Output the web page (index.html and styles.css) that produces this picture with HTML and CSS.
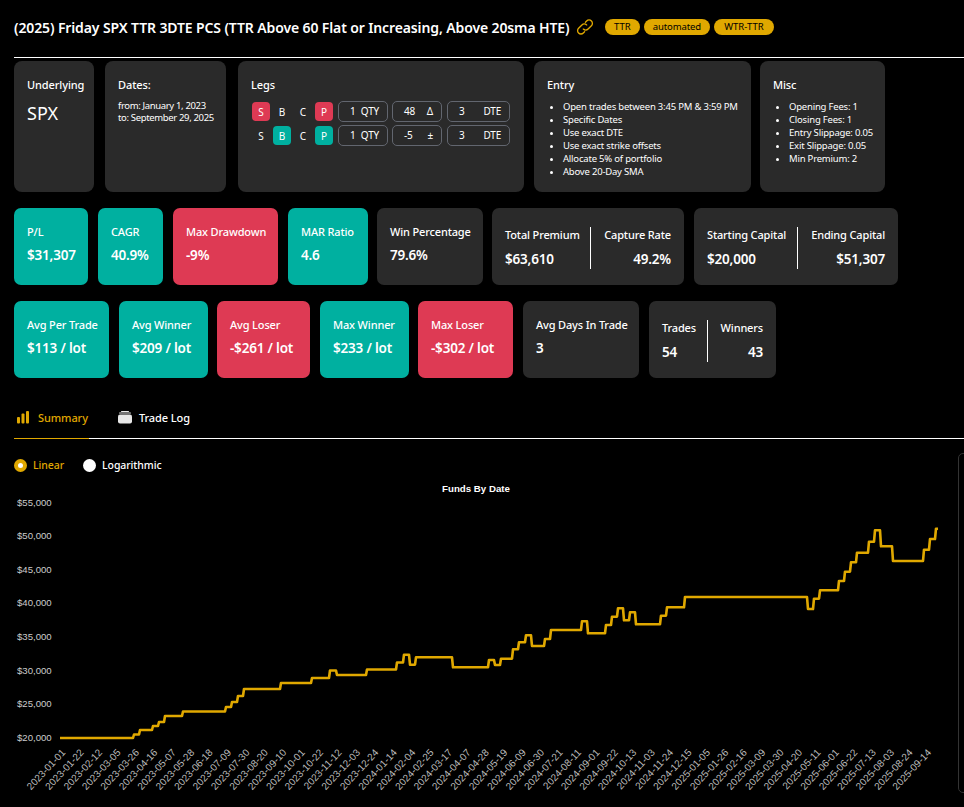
FILE: index.html
```html
<!DOCTYPE html>
<html lang="en">
<head>
<meta charset="utf-8">
<title>Friday SPX TTR 3DTE PCS</title>
<link rel="stylesheet" href="styles.css">
</head>
<body>
<header class="head">
  <h1 class="title">(2025) Friday SPX TTR 3DTE PCS (TTR Above 60 Flat or Increasing, Above 20sma HTE)</h1>
  <svg class="link-icon" viewBox="0 0 24 24" fill="none" stroke="#e0a800" stroke-width="1.6" stroke-linecap="round" stroke-linejoin="round"><path d="M10 14.5a4 4 0 0 0 5.7 0l4-4a4 4 0 0 0-5.7-5.7l-1.5 1.5"/><path d="M14 9.5a4 4 0 0 0-5.7 0l-4 4a4 4 0 0 0 5.7 5.7l1.5-1.5"/></svg>
  <span class="tag t35">TTR</span><span class="tag t66">automated</span><span class="tag t60">WTR-TTR</span>
</header>
<section class="row info">
  <div class="card c-under"><h3>Underlying</h3><p class="spx">SPX</p></div>
  <div class="card c-dates"><h3>Dates:</h3><p class="small">from: January 1, 2023<br>to: September 29, 2025</p></div>
  <div class="card c-legs"><h3>Legs</h3>
    <div class="leg">
      <span class="lt red">S</span><span class="lt">B</span><span class="lt">C</span><span class="lt red">P</span>
      <span class="box b1"><i>1</i><i>QTY</i></span><span class="box b2"><i>48</i><i>Δ</i></span><span class="box b3"><i>3</i><i>DTE</i></span>
    </div>
    <div class="leg">
      <span class="lt">S</span><span class="lt teal">B</span><span class="lt">C</span><span class="lt teal">P</span>
      <span class="box b1"><i>1</i><i>QTY</i></span><span class="box b2"><i>-5</i><i>±</i></span><span class="box b3"><i>3</i><i>DTE</i></span>
    </div>
  </div>
  <div class="card c-entry"><h3>Entry</h3>
    <ul class="small"><li>Open trades between 3:45 PM &amp; 3:59 PM</li><li>Specific Dates</li><li>Use exact DTE</li><li>Use exact strike offsets</li><li>Allocate 5% of portfolio</li><li>Above 20-Day SMA</li></ul>
  </div>
  <div class="card c-misc"><h3>Misc</h3>
    <ul class="small"><li>Opening Fees: 1</li><li>Closing Fees: 1</li><li>Entry Slippage: 0.05</li><li>Exit Slippage: 0.05</li><li>Min Premium: 2</li></ul>
  </div>
</section>
<section class="row stats s1">
  <div class="stat teal w74"><b>P/L</b><strong>$31,307</strong></div>
  <div class="stat teal w65"><b>CAGR</b><strong>40.9%</strong></div>
  <div class="stat red w105"><b>Max Drawdown</b><strong>-9%</strong></div>
  <div class="stat teal w80"><b>MAR Ratio</b><strong>4.6</strong></div>
  <div class="stat dark w106"><b>Win Percentage</b><strong>79.6%</strong></div>
  <div class="stat dark pair w192"><div class="col"><b>Total Premium</b><strong>$63,610</strong></div><div class="col end"><b>Capture Rate</b><strong>49.2%</strong></div></div>
  <div class="stat dark pair w204"><div class="col"><b>Starting Capital</b><strong>$20,000</strong></div><div class="col end"><b>Ending Capital</b><strong>$51,307</strong></div></div>
</section>
<section class="row stats s2">
  <div class="stat teal w95"><b>Avg Per Trade</b><strong>$113 / lot</strong></div>
  <div class="stat teal w89"><b>Avg Winner</b><strong>$209 / lot</strong></div>
  <div class="stat red w93"><b>Avg Loser</b><strong>-$261 / lot</strong></div>
  <div class="stat teal w89"><b>Max Winner</b><strong>$233 / lot</strong></div>
  <div class="stat red w95 pull"><b>Max Loser</b><strong>-$302 / lot</strong></div>
  <div class="stat dark w116"><b>Avg Days In Trade</b><strong>3</strong></div>
  <div class="stat dark pair w127"><div class="col"><b>Trades</b><strong>54</strong></div><div class="col end"><b>Winners</b><strong>43</strong></div></div>
</section>
<nav class="tabs">
  <a class="tab active"><svg viewBox="0 0 14 14" class="tab-icon"><rect x="1" y="7" width="3" height="6.5" rx="1"/><rect x="5.5" y="3.5" width="3" height="10" rx="1"/><rect x="10" y="1" width="3" height="12.5" rx="1"/></svg>Summary</a>
  <a class="tab"><svg viewBox="0 0 14 14" class="tab-icon log"><rect x="3" y="1" width="8" height="1" rx="0.5"/><rect x="1" y="2.6" width="12" height="1" rx="0.5"/><rect x="0" y="4.5" width="14" height="9" rx="2"/></svg>Trade Log</a>
</nav>
<div class="radios">
  <label class="radio on"><span class="dot"></span>Linear</label>
  <label class="radio"><span class="dot"></span>Logarithmic</label>
</div>
<svg class="chart" id="chart" width="964" height="332" viewBox="0 475 964 332"></svg>
<div class="side-panel"></div>
<script src="chart.js"></script>
</body>
</html>
```
FILE: styles.css
```css
* { box-sizing: border-box; }
html, body { margin: 0; height: 807px; overflow: hidden; }
body { background: #000; color: #fff; font-family: "Noto Sans", "Open Sans", sans-serif; position: relative; }
.head { height: 58px; margin-left: 14px; border-bottom: 1px solid #fff; display: flex; align-items: center; padding-bottom: 3px; }
.title { margin: 0; font-size: 14px; font-weight: 600; white-space: nowrap; letter-spacing: -0.12px; }
.link-icon { width: 20px; height: 20px; margin: 0 9.5px 0 6px; }
.tag { background: #e0a800; color: #000; font-size: 9.5px; border-radius: 9px; height: 16px; line-height: 16px; text-align: center; margin-right: 4px; }
.t35 { width: 35px; }
.t66 { width: 66px; letter-spacing: -0.1px; }
.t60 { width: 60px; }
.row { display: flex; gap: 10px; margin-left: 14px; }
.info { margin-top: 3px; height: 131px; }
.card { background: #2a2a2a; border-radius: 8px; padding: 17px 13px 0; }
.card h3 { margin: 0; font-size: 11px; font-weight: 500; line-height: 13px; letter-spacing: -0.1px; }
.c-under { width: 80px; }
.c-dates { width: 121px; margin-left: 1px; }
.c-legs { width: 286px; margin-left: 2px; }
.c-entry { width: 217px; }
.c-misc { width: 125px; margin-left: -1px; }
.spx { margin: 10px 0 0; font-size: 18px; line-height: 24px; }
.small { font-size: 9.5px; line-height: 13px; letter-spacing: -0.2px; white-space: nowrap; }
.c-dates .small { margin: 9px 0 0; line-height: 12px; letter-spacing: -0.35px; }
ul.small { margin: 8.5px 0 0; padding: 0 0 0 16px; }
.leg { display: flex; align-items: center; height: 21px; margin-top: 3px; font-size: 10px; padding-left: 1px; }
.c-legs h3 + .leg { margin-top: 10px; }
.lt { width: 18px; height: 19px; border-radius: 4px; display: flex; align-items: center; justify-content: center; margin-right: 3px; }
.lt.red { background: #de3a54; }
.lt.teal { background: #00b0a0; }
.box { display: flex; justify-content: space-between; height: 21px; line-height: 19px; border: 1px solid #62666f; border-radius: 5px; padding: 0 8px 0 11px; width: 50px; margin-right: 4px; font-size: 10px; letter-spacing: -0.2px; }
.box i { font-style: normal; }
.b1 { margin-left: 2px; }
.box.b2 { margin-right: 5px; }
.box.b3 { width: 63px; margin-right: 0; }
.stats { height: 77px; }
.s1 { margin-top: 16px; }
.s2 { margin-top: 16px; }
.stat { border-radius: 7px; padding: 17px 13px 0; flex: none; }
.stat b { display: block; font-size: 11px; font-weight: 500; line-height: 14px; white-space: nowrap; letter-spacing: -0.15px; }
.stat strong { display: block; font-size: 13.5px; font-weight: 600; line-height: 18px; margin-top: 7px; white-space: nowrap; letter-spacing: -0.2px; }
.stat.teal { background: #00b0a0; }
.stat.red { background: #de3a54; }
.stat.dark { background: #2a2a2a; }
.pair { display: flex; justify-content: space-between; padding-top: 19px; }
.col { flex: none; }
.col b { padding-top: 1px; height: 15px; }
.col strong { margin-top: 8px; }
.col.end { text-align: right; border-left: 1px solid #fff; padding-left: 13px; height: 42px; }
.w74 { width: 74px; } .w65 { width: 65px; } .w105 { width: 105px; } .w80 { width: 80px; } .w106 { width: 106px; margin-left: -1px; }
.w192 { width: 192px; margin-left: -1px; } .w204 { width: 204px; }
.w95 { width: 95px; } .w89 { width: 89px; } .w93 { width: 93px; margin-left: -1px; } .w116 { width: 116px; } .w127 { width: 127px; }
.pull { margin-left: -1px; }
.tabs { display: flex; height: 45px; margin: 16px 0 0 14px; border-bottom: 1px solid #fff; font-size: 11px; font-weight: 500; letter-spacing: -0.1px; }
.tab { display: flex; align-items: center; height: 45px; padding: 2px 0 0 2px; width: 75px; white-space: nowrap; border-bottom: 1px solid transparent; }
.tab.active { color: #e0a800; border-bottom-color: #e0a800; margin-right: 27px; }
.tab-icon { width: 14px; height: 14px; fill: #e6e6e6; margin-right: 8px; }
.tab-icon.log { margin-right: 7px; }
.tab.active .tab-icon { fill: #e0a800; }
.radios { display: flex; gap: 19px; margin: 19px 0 0 14px; height: 14px; font-size: 10.5px; font-weight: 500; letter-spacing: -0.08px; }
.radio { display: flex; align-items: center; gap: 6px; height: 14px; }
.dot { width: 13px; height: 13px; border-radius: 50%; background: #fff; }
.radio.on { color: #e0a800; }
.radio.on .dot { background: #fff; border: 4px solid #e0a800; }
.chart { display: block; margin-top: 3px; }
.chart text { font-family: "Liberation Sans", Arial, sans-serif; }
.side-panel { position: absolute; left: 958px; top: 453px; width: 20px; height: 340px; border: 1px solid #333; border-radius: 5px; }
```
FILE: chart.js
```js
var ns = "http://www.w3.org/2000/svg";
var svg = document.getElementById("chart");
function add(tag, attrs, text) {
  var el = document.createElementNS(ns, tag);
  for (var k in attrs) el.setAttribute(k, attrs[k]);
  if (text) el.textContent = text;
  svg.appendChild(el);
}
add("text", {x: 476, y: 491.5, "font-size": 9.7, "font-weight": 700, fill: "#fff", "text-anchor": "middle"}, "Funds By Date");
for (var i = 0; i < 8; i++) {
  var v = 55 - i * 5;
  add("text", {x: 17, y: 505.5 + i * 33.6, "font-size": 9.6, fill: "#ccc"}, "$" + v + ",000");
}
var dates = ["2023-01-01","2023-01-22","2023-02-12","2023-03-05","2023-03-26","2023-04-16","2023-05-07","2023-05-28","2023-06-18","2023-07-09","2023-07-30","2023-08-20","2023-09-10","2023-10-01","2023-10-22","2023-11-12","2023-12-03","2023-12-24","2024-01-14","2024-02-04","2024-02-25","2024-03-17","2024-04-07","2024-04-28","2024-05-19","2024-06-09","2024-06-30","2024-07-21","2024-08-11","2024-09-01","2024-09-22","2024-10-13","2024-11-03","2024-11-24","2024-12-15","2025-01-05","2025-01-26","2025-02-16","2025-03-09","2025-03-30","2025-04-20","2025-05-11","2025-06-01","2025-06-22","2025-07-13","2025-08-03","2025-08-24","2025-09-14"];
dates.forEach(function (d, i) {
  var x = 66 + i * 18.42, y = 753;
  add("text", {x: x, y: y, "font-size": 10, fill: "#bbb", "text-anchor": "end", transform: "rotate(-47 " + x + " " + y + ")"}, d);
});
var steps = [[60,738],[133,734.5],[139,730],[152,726],[158,722],[164,716],[182,711.5],[225,707],[231,702],[237,696],[243,689],[280,683],[311,678],[329,670.5],[336,675],[366,669.5],[396,662.5],[403,654.7],[409,664.7],[415,657.3],[452,667.3],[488,660],[494,665],[500,658.7],[512,649.3],[518,642.3],[525,635.3],[531,646],[544,639],[550,630],[581,621.3],[587,633.3],[605,625],[611,616.7],[617,608.3],[623,620.3],[629,612.3],[635,624.3],[660,615.7],[666,607.3],[684,597],[807,609],[813,598.7],[819,590.3],[838,581],[844,571.7],[850,562.3],[856,552.7],[868,541.7],[874,530.3],[880,546.3],[892,561],[923,549.7],[929,539],[935,528.7]];
var d = "M" + steps[0][0] + " " + steps[0][1];
for (var j = 1; j < steps.length; j++) {
  d += "L" + steps[j][0] + " " + steps[j - 1][1] + "L" + (steps[j][0] + 1) + " " + steps[j][1];
}
d += "L938 " + steps[steps.length - 1][1];
add("path", {d: d, fill: "none", stroke: "#e0a800", "stroke-width": 2.6, "stroke-linejoin": "round"});
```
